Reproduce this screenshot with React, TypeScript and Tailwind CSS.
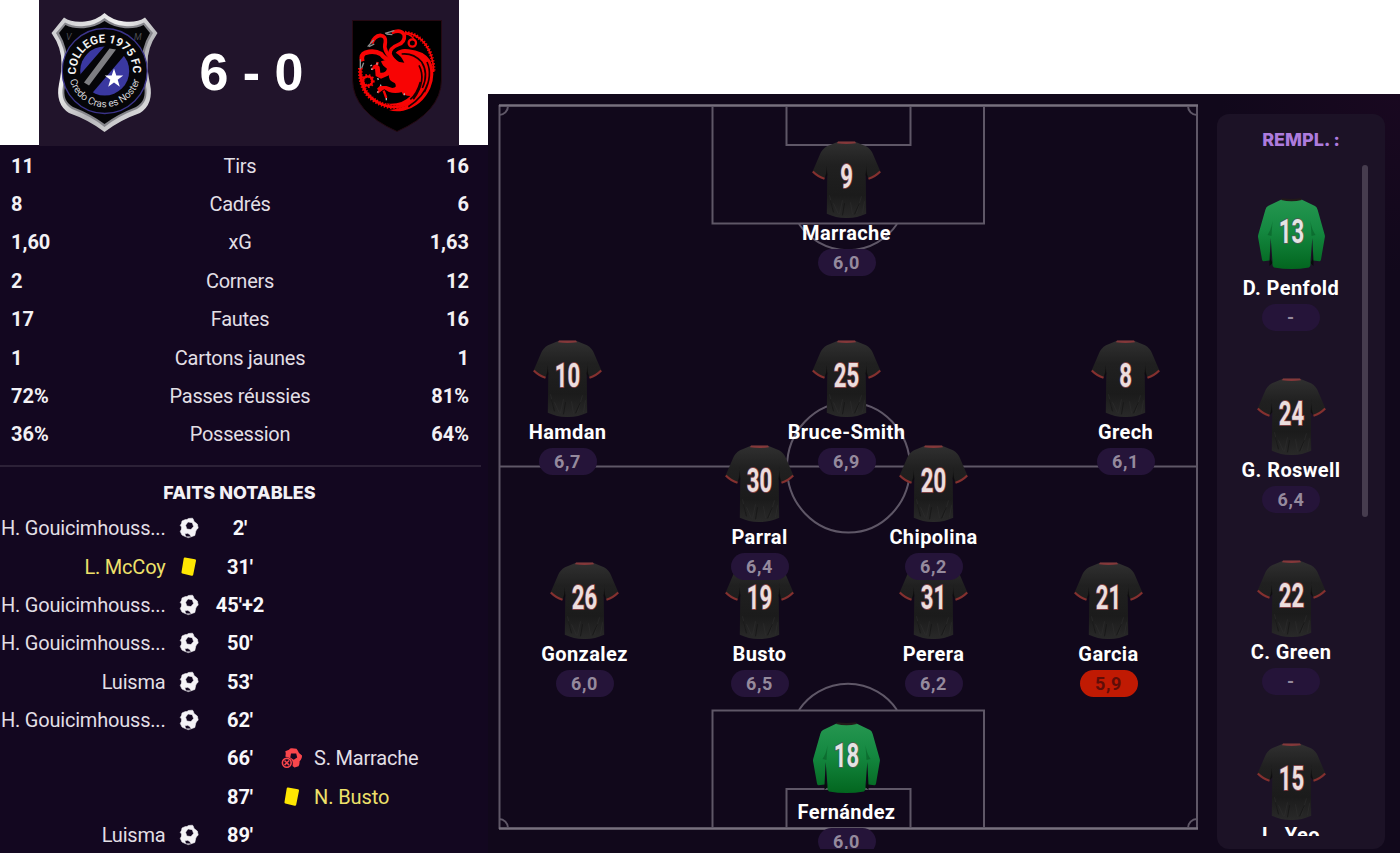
const stats: [string, string, string][] = [
  ['11', 'Tirs', '16'],
  ['8', 'Cadrés', '6'],
  ['1,60', 'xG', '1,63'],
  ['2', 'Corners', '12'],
  ['17', 'Fautes', '16'],
  ['1', 'Cartons jaunes', '1'],
  ['72%', 'Passes réussies', '81%'],
  ['36%', 'Possession', '64%'],
];

type Kind = 'goal' | 'card' | 'missed';
type Fact = { minute: string; side: 'home' | 'away'; kind: Kind; name: string };

const facts: Fact[] = [
  { minute: "2'", side: 'home', kind: 'goal', name: 'H. Gouicimhouss...' },
  { minute: "31'", side: 'home', kind: 'card', name: 'L. McCoy' },
  { minute: "45'+2", side: 'home', kind: 'goal', name: 'H. Gouicimhouss...' },
  { minute: "50'", side: 'home', kind: 'goal', name: 'H. Gouicimhouss...' },
  { minute: "53'", side: 'home', kind: 'goal', name: 'Luisma' },
  { minute: "62'", side: 'home', kind: 'goal', name: 'H. Gouicimhouss...' },
  { minute: "66'", side: 'away', kind: 'missed', name: 'S. Marrache' },
  { minute: "87'", side: 'away', kind: 'card', name: 'N. Busto' },
  { minute: "89'", side: 'home', kind: 'goal', name: 'Luisma' },
];

type Player = { n: number; name: string; rating: string; keeper?: boolean; low?: boolean };

const lineup: (Player & { x: number; y: number })[] = [
  { n: 18, name: 'Fernández', rating: '6,0', x: 358.5, y: 626, keeper: true },
  { n: 26, name: 'Gonzalez', rating: '6,0', x: 96.5, y: 468 },
  { n: 19, name: 'Busto', rating: '6,5', x: 271.5, y: 468 },
  { n: 31, name: 'Perera', rating: '6,2', x: 445.5, y: 468 },
  { n: 21, name: 'Garcia', rating: '5,9', x: 620.5, y: 468, low: true },
  { n: 30, name: 'Parral', rating: '6,4', x: 271.5, y: 351 },
  { n: 20, name: 'Chipolina', rating: '6,2', x: 445.5, y: 351 },
  { n: 10, name: 'Hamdan', rating: '6,7', x: 79.5, y: 246 },
  { n: 25, name: 'Bruce-Smith', rating: '6,9', x: 358.5, y: 246 },
  { n: 8, name: 'Grech', rating: '6,1', x: 637.5, y: 246 },
  { n: 9, name: 'Marrache', rating: '6,0', x: 358.5, y: 47 },
];

const bench: Player[] = [
  { n: 13, name: 'D. Penfold', rating: '-', keeper: true },
  { n: 24, name: 'G. Roswell', rating: '6,4' },
  { n: 22, name: 'C. Green', rating: '-' },
  { n: 15, name: 'L. Yeo', rating: '-' },
];

function ShirtDefs() {
  return (
    <svg className="absolute h-0 w-0" aria-hidden="true">
      <defs>
        <linearGradient id="blackBody" x1="0" y1="0" x2="0" y2="1">
          <stop offset="0" stopColor="#303030" />
          <stop offset=".3" stopColor="#202020" />
          <stop offset=".7" stopColor="#1b1b1b" />
          <stop offset="1" stopColor="#292929" />
        </linearGradient>
        <linearGradient id="greenBody" x1="0" y1="0" x2="0" y2="1">
          <stop offset="0" stopColor="#259650" />
          <stop offset=".45" stopColor="#148840" />
          <stop offset="1" stopColor="#03661f" />
        </linearGradient>
        <linearGradient id="rim" x1="0" y1="0" x2="1" y2="1">
          <stop offset="0" stopColor="#c4c4c8" />
          <stop offset=".35" stopColor="#f0f0f0" />
          <stop offset=".6" stopColor="#b5b5b9" />
          <stop offset="1" stopColor="#ededed" />
        </linearGradient>
      </defs>
    </svg>
  );
}

function Shirt({ n, keeper }: { n: number; keeper?: boolean }) {
  return (
    <svg viewBox="-0.5 0 70 80" className="-ml-px block h-[80px] w-[70px] shrink-0">
      {keeper ? (
        <g>
          <path d="M13 46l1 17 2 4-3 3zM57 46l-1 17-2 4 3 3z" fill="#070b0b" />
          <path
            d="M25 3.500 L11.500 10 Q9.500 11 8.800 14 L1.800 38.500 Q1.300 40.500 1.700 42 L5.500 63.500 Q5.800 65.300 7 65.200 L13 64.500 L14.200 42 L16 66 Q15.500 71 17.500 71.500 Q35 74.500 52.500 71.500 Q54.500 71 54 66 L55.800 42 L57 64.500 L63 65.200 Q64.200 65.300 64.500 63.500 L68.200 42 Q68.700 40.500 68.100 38.500 L61.200 14 Q60.500 11 58.500 10 L45 3.500 Z"
            fill="url(#greenBody)"
          />
          <path d="M16 25l-1 15-4-1q4-6 5-14zM54 25l1 15 4-1q-4-6-5-14z" fill="#05501f" opacity=".45" />
          <path d="M25.500 2.200q9.500 1.500 19 0l.8 1.700q-10.300 2.600-20.600 0z" fill="#221a19" />
        </g>
      ) : (
        <g transform="translate(0 -.7)">
          <path
            d="M26.500 1.500 L15.500 6 Q10.500 8.800 8.500 14 L1 31.500 Q6 37.500 13 39 L15.800 33 L15.300 73.500 Q25 78 35 77.700 Q45 78 54.700 73.500 L54.200 33 L57 39 Q64 37.500 69 31.500 L61.500 14 Q59.500 8.800 54.500 6 L43.500 1.500 Z"
            fill="url(#blackBody)"
          />
          <path d="M15 21l.8 14-2.600 3q2.800-8 1.800-17zM55 21l-.8 14 2.600 3q-2.800-8-1.800-17z" fill="#0b0b0b" opacity=".8" />
          <path d="M18 55l3 13M22 63l5 11M31 60l-3 14M39 62l2 12M50 56l-5 17M53 61l-2 12" stroke="#303030" strokeWidth="1" opacity=".5" />
          <path d="M19 60l3 12M33 63l-2 12M48 63l-5 11" stroke="#121212" strokeWidth="1" opacity=".6" />
          <path d="M1.300 31.200q5.200 5.300 11.700 7.200M68.700 31.200q-5.200 5.300-11.700 7.200" fill="none" stroke="#84302f" strokeWidth="2.200" />
          <path d="M26.500 1.200h17l1 1.700q-9.500 1.600-19 0z" fill="#84383a" />
        </g>
      )}
      <text
        transform="translate(35 46.500) scale(.67 1)"
        textAnchor="middle"
        className="font-['Roboto',sans-serif] text-[33px] font-bold"
        fill={keeper ? '#e4e4e4' : '#ecdede'}
        stroke={keeper ? '#4d5e50' : '#7c4044'}
        strokeWidth="1.800"
        paintOrder="stroke"
      >
        {n}
      </text>
    </svg>
  );
}

function PlayerCard({ player }: { player: Player }) {
  return (
    <div className="flex w-[140px] flex-col items-center">
      <Shirt n={player.n} keeper={player.keeper} />
      <div className="-mt-[2px] mb-[2px] flex h-7 items-center whitespace-nowrap text-[20px] font-bold leading-7 tracking-[.4px] text-white">{player.name}</div>
      <div
        className={
          player.low
            ? 'flex h-[27px] w-[58px] items-center justify-center rounded-full bg-[#c01a03] text-[18px] font-bold tracking-[.7px] text-[#5f0d08]'
            : 'flex h-[27px] w-[58px] items-center justify-center rounded-full bg-[#251439] text-[18px] font-bold tracking-[.7px] text-[#958a9d]'
        }
      >
        {player.rating}
      </div>
    </div>
  );
}

function FactIcon({ kind }: { kind: Kind }) {
  if (kind === 'card') {
    return (
      <svg viewBox="0 0 22 22" className="ml-px h-[22px] w-[22px]">
        <path d="M7 1.600L17 3.200Q18.300 3.500 18 4.800L15.200 18.800Q14.900 20 13.600 19.700L4.300 17.600Q3.200 17.300 3.500 16.100L5.700 2.600Q5.900 1.400 7 1.600Z" fill="#fee602" />
      </svg>
    );
  }
  if (kind === 'missed') {
    return (
      <svg viewBox="0 0 22 22" className="h-[22px] w-[22px]">
        <path
          fillRule="evenodd"
          d="M4.300 4.200L8 2.700Q9 1.200 11 1.300L15.500 1.700Q17 3.500 18 6L21 8.500Q21.200 10.500 20 12.500L18.500 14.500Q18.800 17 17.500 19.200L13.500 20.500L11.500 19Q12.700 13 8.500 11L4.200 9.600Q5.200 7 4.300 4.200ZM10 6.600L9.300 10.500L12.700 12.700L16.200 10.500L15.200 6.500Z"
          fill="#f9464c"
        />
        <circle cx="5.800" cy="15.800" r="4.400" fill="none" stroke="#f9464c" strokeWidth="1.600" />
        <path d="M3.500 13.500l4.600 4.600M8.100 13.500l-4.600 4.600" stroke="#f9464c" strokeWidth="1.500" />
      </svg>
    );
  }
  return (
    <svg viewBox="0 0 22 22" className="ml-px h-[22px] w-[22px]">
      <path
        fillRule="evenodd"
        d="M4 4L7.500 2.500Q9 3 10.500 1.500L14.500 1.200Q15.500 2 16 4.500L19.300 7L20.200 11Q18.500 12.500 17.800 14L16.800 18.500L13 19.800Q12.500 17 9.500 16.300L6.800 16.800L7.800 19.800L4 18L2.300 14.500Q4 12.500 3.600 10L2.300 8.500Q4 6.500 4 4ZM10 4.900L7.600 8.200L8.800 12L12.900 12.600L15.600 9.600L14.300 5.700Z"
        fill="#f5f3f7"
        stroke="#f5f3f7"
        strokeWidth=".6"
        strokeLinejoin="round"
      />
      <path d="M7.800 19.300h4.800l.5 1-3 .9-2-.9z" fill="#aaa4af" />
    </svg>
  );
}

function HomeCrest() {
  return (
    <svg viewBox="0 0 110 122" className="h-[122px] w-[110px]">
      <path
        d="M54.500 1 Q62 8 74 9.500 Q87 11 95 5.500 L107.500 21 Q97 36 97.500 52 Q97.500 60 100 72 Q104 92 90 101 Q70 108 54.500 120 Q39 108 19 101 Q5 92 9 72 Q11.500 60 11.500 52 Q12 36 1.500 21 L14 5.500 Q22 11 35 9.500 Q47 8 54.500 1Z"
        fill="url(#rim)"
      />
      <path
        d="M54.500 6 Q63 13 75 14 Q86 15 94 10.500 L103 21 Q93 36 93.500 54 Q94 64 96 74 Q99 90 87 97 Q68 104 54.500 115 Q41 104 22 97 Q10 90 13 74 Q15 64 15.500 54 Q16 36 6 21 L15 10.500 Q23 15 34 14 Q46 13 54.500 6Z"
        fill="#85858b"
      />
      <path
        d="M54.500 9 Q63 15 75 16.200 Q86 17 93.500 13 L100 21 Q91 36 91.500 54 Q92 64 94 74 Q97 89 86 95 Q68 102 54.500 112 Q41 102 23 95 Q12 89 15 74 Q17 64 17.500 54 Q18 36 9 21 L15.500 13 Q23 17 34 16.200 Q46 15 54.500 9Z"
        fill="#050508"
      />
      <circle cx="54.700" cy="59" r="42.500" fill="#050508" stroke="#3b348a" strokeWidth="1.300" />
      <circle cx="54.700" cy="59" r="24.500" fill="#3a38a0" />
      <path d="M22 72L60 28L79 38L38 86Z" fill="#050508" />
      <path d="M34 70.500L59.500 36.500L66 37.500L39 73.500Z" fill="#7e7e82" />
      <path d="M64 56.500L66.300 63.500H73.200L67.700 67.800L69.800 74.800L64 70.600L58.200 74.800L60.300 67.800L54.800 63.500H61.700Z" fill="#fff" />
      <path id="crestTop" d="M26.900 63.500A28.200 28.200 0 1 1 82.500 63.500" fill="none" />
      <path id="crestBottom" d="M18.900 63A36 36 0 0 0 90.500 63" fill="none" />
      <text className="font-['Roboto',sans-serif] text-[11.500px] font-bold" fill="#f2f2f2">
        <textPath href="#crestTop" startOffset="1">COLLEGE 1975 FC</textPath>
      </text>
      <text className="font-['Roboto',sans-serif] text-[10px]" fill="#d4d4d8">
        <textPath href="#crestBottom" startOffset="50%" textAnchor="middle">Credo Cras es Noster</textPath>
      </text>
      <text x="16" y="28" className="font-['Roboto',sans-serif] text-[9px] italic" fill="#4b4b50">V</text>
      <text x="84" y="28" className="font-['Roboto',sans-serif] text-[9px] italic" fill="#4b4b50">M</text>
    </svg>
  );
}

function AwayCrest() {
  return (
    <svg viewBox="0 0 92 114" className="h-[114px] w-[92px]">
      <path d="M1.500 1.500H90.500V61Q90 93 46 112.500Q2 93 1.500 61Z" fill="#000" stroke="#240912" strokeWidth="1" />
      <g transform="translate(-6 -7) scale(.33333)">
        <g fill="none" stroke="#f80404">
          <path d="M52 148Q46 128 62 122Q88 114 108 126Q118 140 145 152" strokeWidth="14" />
          <path d="M80 94Q88 72 106 70Q124 72 121 92Q112 118 150 150" strokeWidth="11" />
          <path d="M140 62Q170 50 178 70Q180 90 160 98Q134 108 135 126Q140 142 160 155" strokeWidth="11" />
          <path d="M46 168Q44 215 66 245Q92 276 135 284Q190 290 222 245" strokeWidth="8" />
          <path d="M46 168Q44 215 66 245Q92 276 135 284Q190 290 222 245" strokeWidth="14" strokeDasharray="4 5" />
          <path d="M180 62Q215 64 240 95Q266 130 266 180" strokeWidth="5" />
          <path d="M180 62Q215 64 240 95Q266 130 266 180" strokeWidth="11" strokeDasharray="4 5" />
          <circle cx="202" cy="93" r="11" strokeWidth="7" />
          <path d="M183 66Q200 68 208 84" strokeWidth="5" />
          <circle cx="68" cy="207" r="14" strokeWidth="7" />
          <circle cx="68" cy="207" r="15" strokeWidth="12" strokeDasharray="4 5" />
        </g>
        <path
          d="M108 148Q130 140 150 148L178 152Q168 130 152 122Q166 108 190 112Q236 116 256 145Q274 185 256 228Q232 282 175 296Q150 300 132 294Q168 290 192 276Q152 286 120 274Q170 280 196 252Q176 252 172 240Q150 246 132 240L118 232L104 240L96 230L104 222L124 222L142 228Q158 228 150 214Q128 204 132 190L108 200L92 192L90 170L82 162L94 156L104 164L106 182Q122 184 126 170Q112 162 108 148Z"
          fill="#f80404"
        />
        <path
          d="M170 126Q205 122 230 150Q252 185 232 228M222 160Q246 205 205 262M246 150Q264 190 238 240M250 210Q236 256 190 284M226 210Q216 246 196 262"
          fill="none"
          stroke="#1c0000"
          strokeWidth="5"
        />
        <g fill="none" stroke="#f80404" strokeWidth="7">
          <path d="M92 164L80 172M96 160L98 150M110 230L98 242M116 236L124 258M172 236L178 248" />
        </g>
        <g fill="none" stroke="#8d8d8d" strokeWidth="4">
          <path d="M120 64L148 56M124 66L142 68M68 104L86 84M72 104L88 96M46 172L46 142M50 168L56 152" />
          <path d="M76 162l5-3M78 172l5-1M96 152v6M98 198l2 6M97 242l3-4M106 218l2 4M124 258v7M178 244v6" stroke="#b5b5b5" />
        </g>
      </g>
    </svg>
  );
}

function PitchLines() {
  return (
    <svg viewBox="0 0 912 759" className="absolute left-0 top-0 h-[759px] w-[912px]" fill="none" stroke="#5f5767" strokeWidth="2">
      <path d="M11.500 11V735M709 11V735" />
      <path d="M11 11.500H710M11 734.500H710" stroke="#77707e" strokeWidth="2.600" />
      <path d="M11 372.500H710" />
      <path d="M224.500 12V129.500H496V12M298.500 12V51H422.500V12" />
      <path d="M224.500 734V616.500H496V734M298.500 734V695H422.500V734" />
      <path d="M311 130A59 59 0 0 0 409 130M311 616A59 59 0 0 1 409 616" />
      <ellipse cx="360.500" cy="373.500" rx="61.500" ry="65" />
      <path d="M20 12A9 9 0 0 1 11 21M700 12A9 9 0 0 0 709 21M20 734A9 9 0 0 0 11 725M700 734A9 9 0 0 1 709 725" />
    </svg>
  );
}

export default function App() {
  return (
    <main className="relative flex h-[853px] w-[1400px] overflow-hidden bg-white font-['Roboto','Liberation_Sans',sans-serif] antialiased">
      <ShirtDefs />

      <section className="flex w-[488px] shrink-0 flex-col">
        <header className="ml-[39px] flex h-[145px] w-[420px] shrink-0 items-start justify-between bg-[#21142b] pl-[11px] pr-4">
          <div className="pt-[12px]"><HomeCrest /></div>
          <div className="pr-2 pt-[36px] font-['Liberation_Sans',sans-serif] text-[52px] font-bold leading-[72px] text-white">6 - 0</div>
          <div className="pt-[19px]"><AwayCrest /></div>
        </header>

        <div className="flex flex-1 flex-col bg-[#130720]">
          <div className="ml-[39px] h-px w-[420px] bg-[#21142b]" />
          <div className="w-[480px] px-[11px] pt-[.5px]">
            {stats.map(([home, label, away]) => (
              <div key={label} className="grid h-[38.4px] grid-cols-[80px_1fr_80px] items-center text-[20px]">
                <span className="font-bold text-[#f3f1f5]">{home}</span>
                <span className="text-center tracking-[-.25px] text-[#e2dfe5]">{label}</span>
                <span className="text-right font-bold text-[#f3f1f5]">{away}</span>
              </div>
            ))}
          </div>
          <div className="mt-[11px] h-[2px] w-[481px] shrink-0 bg-[#2c2137]" />
          <h2 className="mt-[14.3px] h-[24px] w-[479px] shrink-0 text-center font-['Inter',sans-serif] text-[18px] font-extrabold leading-6 text-[#f3f1f5]">
            FAITS NOTABLES
          </h2>
          <div className="mt-[4px]">
            {facts.map((fact) => (
              <div key={fact.minute} className="grid h-[38.4px] grid-cols-[165.5px_45.5px_58px_45px_1fr] items-center whitespace-nowrap text-[20px]">
                <span className={fact.kind === 'card' ? 'flex justify-end tracking-[-.2px] text-[#eee06a]' : 'flex justify-end tracking-[-.2px] text-[#e2dfe5]'}>
                  {fact.side === 'home' && fact.name}
                </span>
                <span className="flex justify-center">{fact.side === 'home' && <FactIcon kind={fact.kind} />}</span>
                <span className="text-center font-bold text-[#f8f7fa]">{fact.minute}</span>
                <span className="flex justify-center">{fact.side === 'away' && <FactIcon kind={fact.kind} />}</span>
                <span className={fact.kind === 'card' ? 'tracking-[-.1px] text-[#eee06a]' : 'tracking-[-.2px] text-[#e2dfe5]'}>
                  {fact.side === 'away' && fact.name}
                </span>
              </div>
            ))}
          </div>
        </div>
      </section>

      <section className="relative mt-[94px] flex h-[759px] w-[912px] shrink-0 bg-[#11081b] bg-[radial-gradient(circle_at_100%_0%,#190820_0px,#11081b_180px)]">
        <div className="relative h-[755px] w-[729px] shrink-0 overflow-hidden">
          <PitchLines />
          {lineup.map((player) => (
            <div key={player.n} className="absolute -translate-x-1/2" style={{ left: player.x, top: player.y }}>
              <PlayerCard player={player} />
            </div>
          ))}
        </div>

        <aside className="relative mt-5 flex h-[735px] w-[168px] flex-col overflow-hidden rounded-[12px] bg-[#1c1226]">
          <h2 className="mt-3 h-7 w-full text-center font-['Inter',sans-serif] text-[18px] font-extrabold leading-7 text-[#ad7bdd]">REMPL. :</h2>
          <div className="mt-[11px] flex h-[671px] overflow-hidden">
            <div className="flex w-[145px] shrink-0 flex-col gap-[47.2px] pl-1 pt-[31px]">
              {bench.map((player) => (
                <PlayerCard key={player.n} player={player} />
              ))}
            </div>
            <div className="h-[352px] w-[6px] rounded-full bg-[#463c4e]" />
          </div>
        </aside>
      </section>
    </main>
  );
}
